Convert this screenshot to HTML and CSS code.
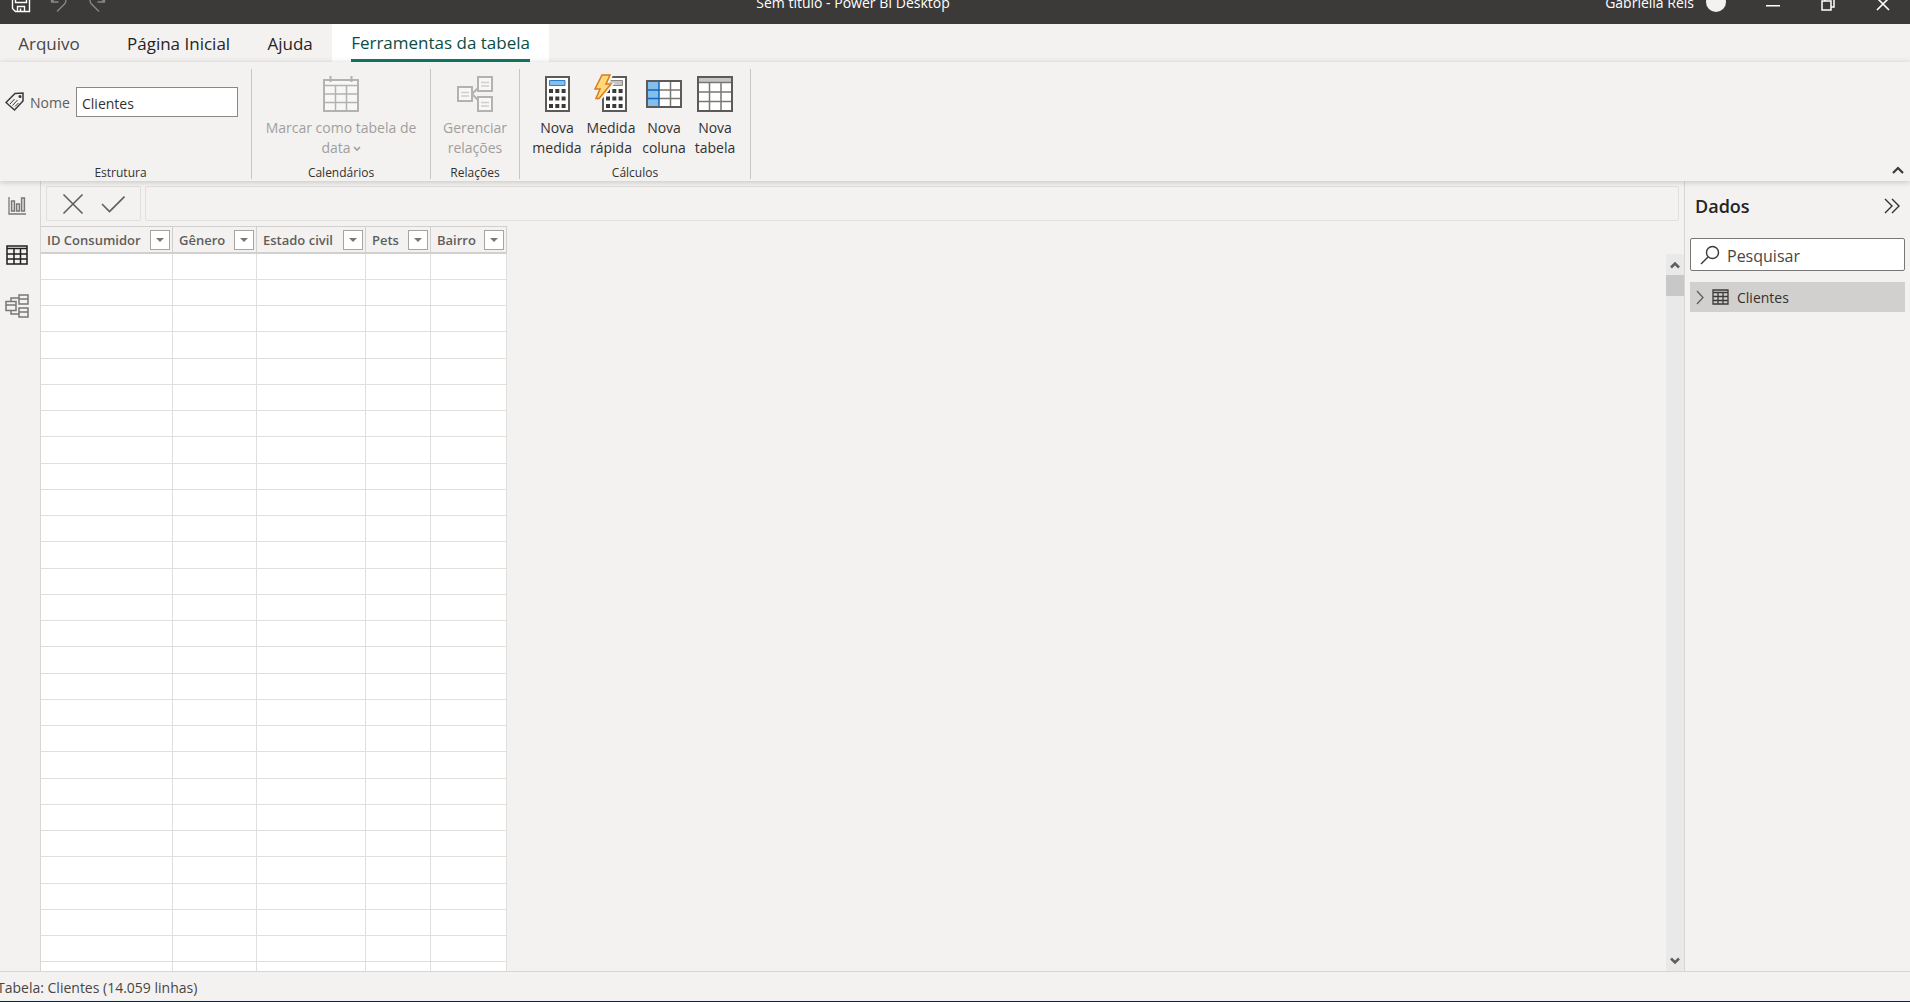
FILE: index.html
```html
<!DOCTYPE html>
<html lang="pt-BR">
<head>
<meta charset="utf-8">
<title>Sem título - Power BI Desktop</title>
<link rel="stylesheet" href="styles.css">
</head>
<body>
<div class="app">
  <header class="titlebar">
    <div class="titlebar-row">
      <div class="quick">
        <button class="plain" aria-label="Salvar"><svg width="20" height="20" viewBox="0 0 20 20" fill="none" stroke="#fff" stroke-width="1.4"><path d="M1.500 1.500h17v17h-14l-3-3zM4.500 1.500v8h11v-8M5.500 5.500h9M6.500 18.500v-5h7v5M9.500 18.500v-3"/></svg></button>
        <button class="plain" aria-label="Desfazer"><svg width="20" height="20" viewBox="0 0 20 20" fill="none" stroke="#8a8886" stroke-width="1.300"><path d="M2.500 2v7h7M2.500 9L8 3.500c5-4 11 2 8 7L8 18.500"/></svg></button>
        <button class="plain" aria-label="Refazer"><svg width="20" height="20" viewBox="0 0 20 20" fill="none" stroke="#8a8886" stroke-width="1.300"><path d="M17.500 2v7h-7M17.500 9L12 3.500c-5-4-11 2-8 7L12 18.500"/></svg></button>
      </div>
      <div class="doc-title">Sem título - Power BI Desktop</div>
      <div class="account">
        <span>Gabriella Reis</span>
        <span class="avatar"></span>
        <button class="plain win" aria-label="Minimizar"><svg width="14" height="14" viewBox="0 0 14 14"><path d="M0 8h14v1.500H0z" fill="#fff"/></svg></button>
        <button class="plain win" aria-label="Restaurar"><svg width="14" height="14" viewBox="0 0 14 14" fill="none" stroke="#fff" stroke-width="1.500"><path d="M1 4h9v9H1zM4 4V1h9v9h-3"/></svg></button>
        <button class="plain win" aria-label="Fechar"><svg width="14" height="14" viewBox="0 0 14 14" stroke="#fff" stroke-width="1.600"><path d="M1 1l12 12M13 1L1 13"/></svg></button>
      </div>
    </div>
  </header>

  <nav class="tabs">
    <button class="tab tab-file">Arquivo</button>
    <button class="tab tab-home">Página Inicial</button>
    <button class="tab">Ajuda</button>
    <button class="tab active"><span>Ferramentas da tabela</span></button>
  </nav>

  <section class="ribbon">
    <div class="group group-structure">
      <div class="group-body name-row">
        <svg width="20" height="20" viewBox="0 0 20 20" fill="none" stroke="#3b3a39" stroke-width="1.500"><path d="M1 10.500L10 1.500l8-.5v8L9.500 18z"/><path d="M5 12l4.500-5M7.500 13.500l5-5.500M10 14.500l3.500-3.500" stroke-width="1"/><circle cx="15" cy="4.500" r=".8" fill="#3b3a39"/></svg>
        <label for="table-name">Nome</label>
        <input id="table-name" type="text" value="Clientes">
      </div>
      <div class="group-label">Estrutura</div>
    </div>
    <div class="group group-calendar">
      <div class="group-body">
        <button class="cmd" disabled>
          <svg width="36" height="36" viewBox="0 0 36 36" fill="none" stroke="#b3b2b0"><path d="M1 4h34v31H1z" fill="#f7f7f7" stroke-width="2"/><path d="M1 9.500h34M12.500 10v24M23.500 10v24M1 18h34M1 26.500h34" stroke-width="1.500"/><path d="M7.500 0v6M28.500 0v6" stroke-width="2"/></svg>
          <span>Marcar como tabela de data<svg class="caret" width="8" height="6" viewBox="0 0 8 6" fill="none" stroke="#a19f9d" stroke-width="1.600"><path d="M1 1l3 3 3-3"/></svg></span>
        </button>
      </div>
      <div class="group-label">Calendários</div>
    </div>
    <div class="group group-relations">
      <div class="group-body">
        <button class="cmd" disabled>
          <svg width="36" height="36" viewBox="0 0 36 36" fill="none" stroke="#b3b2b0" stroke-width="2"><path d="M15 18l7-7M15 18l7 7"/><path d="M1 11h14v14H1zM21 1h14v14H21zM21 21h14v14H21z" fill="#f7f7f7"/><path d="M4 16.500h8M4 20h8M24 6.500h8M24 10h8M24 26.500h8M24 30h8" stroke="#cfcecc" stroke-width="1.300"/></svg>
          <span>Gerenciar relações</span>
        </button>
      </div>
      <div class="group-label">Relações</div>
    </div>
    <div class="group group-calc">
      <div class="group-body">
        <button class="cmd">
          <svg width="36" height="36" viewBox="0 0 36 36"><path d="M7 1h23v34H7z" fill="#fff" stroke="#5c5b5a" stroke-width="2"/><path d="M10.500 4.500h15.500v5H10.500z" fill="#83beec" stroke="#2b7fc7"/><path d="M10 15h16.600M10 22.500h16.600M10 30h16.600" stroke="#3b3a39" stroke-width="4" stroke-dasharray="4 2.300"/></svg>
          <span>Nova medida</span>
        </button>
        <button class="cmd">
          <svg width="36" height="36" viewBox="0 0 36 36"><path d="M10 1h23v34H10z" fill="#fff" stroke="#5c5b5a" stroke-width="2"/><path d="M16 4.500h13.500v5H16z" fill="#c8c6c4" stroke="#8a8886"/><path d="M13 15h16.600M13 22.500h16.600M13 30h16.600" stroke="#3b3a39" stroke-width="4" stroke-dasharray="4 2.300"/><path d="M8-1h11l-4 9h5L7 24H2l4-10H1z" fill="#f3f2f1" stroke="#f3f2f1" stroke-width="2"/><path class="bolt" d="M9-1h8l-4 9h5L6 22.500H3L7 13H2z" fill="#ffd97a" stroke="#e07818" stroke-width="1.500"/></svg>
          <span>Medida rápida</span>
        </button>
        <button class="cmd">
          <svg width="36" height="36" viewBox="0 0 36 36"><path d="M1 5h34v26H1z" fill="#fff"/><path d="M1 5h12v26H1z" fill="#83beec"/><path d="M13 14h22M13 22.500h22M24.500 5v26" stroke="#797775" stroke-width="1.500"/><path d="M1 14h12M1 22.500h12M13 5v26" stroke="#1068b8" stroke-width="1.500"/><path d="M1 5h34v26H1z" fill="none" stroke="#5c5b5a" stroke-width="2"/></svg>
          <span>Nova coluna</span>
        </button>
        <button class="cmd">
          <svg width="36" height="36" viewBox="0 0 36 36"><path d="M1 1h34v34H1z" fill="#fff"/><path d="M1 1h34v5H1z" fill="#c8c6c4"/><path d="M1 6.500h34M1 16h34M1 25.500h34M12.500 7v28M24 7v28" stroke="#797775" stroke-width="1.500"/><path d="M1 1h34v34H1z" fill="none" stroke="#5c5b5a" stroke-width="2"/></svg>
          <span>Nova tabela</span>
        </button>
      </div>
      <div class="group-label">Cálculos</div>
    </div>
    <button class="plain collapse" aria-label="Recolher faixa de opções"><svg width="12" height="8" viewBox="0 0 12 8" fill="none" stroke="#3b3a39" stroke-width="2.200"><path d="M1 7l5-5 5 5"/></svg></button>
  </section>

  <main class="workspace">
    <nav class="rail">
      <button class="plain" aria-label="Relatório"><svg width="20" height="20" viewBox="0 0 20 20" fill="#d2d0ce" stroke="#797775" stroke-width="1.300"><path d="M2 1v17h17" fill="none"/><path d="M4.500 5h3v10h-3zM9.500 8h3v7h-3zM14.500 2h3v13h-3z"/></svg></button>
      <button class="plain" aria-label="Dados"><svg width="22" height="20" viewBox="0 0 22 20" fill="none" stroke="#201f1e" stroke-width="1.500"><path d="M1 1h20v18H1zM1 3.500h20M1 9h20M1 14h20M8 4v15M14.500 4v15"/></svg></button>
      <button class="plain" aria-label="Modelo"><svg width="24" height="24" viewBox="0 0 24 24" fill="none" stroke="#797775" stroke-width="1.500"><path d="M1 7.500h10v9H1zM1 11h10M14 1h9v9h-9zM14 5h9M14 14h9v9h-9zM14 18h9M6 7.500V4h8M6 16.500V20h8"/></svg></button>
    </nav>

    <section class="data-view">
      <div class="formula">
        <div class="formula-actions">
          <button class="plain" aria-label="Cancelar"><svg width="22" height="22" viewBox="0 0 22 22" stroke="#605e5c" stroke-width="1.600"><path d="M1.500 1.500l19 19M20.500 1.500l-19 19"/></svg></button>
          <button class="plain" aria-label="Confirmar"><svg width="24" height="18" viewBox="0 0 24 18" fill="none" stroke="#605e5c" stroke-width="1.600"><path d="M1 9l7.500 7.500L23.500 1.500"/></svg></button>
        </div>
        <input class="formula-input" type="text" aria-label="Fórmula">
      </div>
      <div class="grid-area">
        <div class="table-clip">
          <table class="grid">
            <colgroup><col class="c-id"><col class="c-gender"><col class="c-status"><col class="c-pets"><col class="c-area"></colgroup>
            <thead><tr id="head"></tr></thead>
            <tbody id="rows"></tbody>
          </table>
        </div>
        <div class="scroll">
          <button class="plain" aria-label="Rolar para cima"><svg width="10" height="8" viewBox="0 0 10 8" fill="none" stroke="#605e5c" stroke-width="2.500"><path d="M1 6.500l4-4 4 4"/></svg></button>
          <div class="thumb"></div>
          <button class="plain down" aria-label="Rolar para baixo"><svg width="10" height="8" viewBox="0 0 10 8" fill="none" stroke="#605e5c" stroke-width="2.500"><path d="M1 1.500l4 4 4-4"/></svg></button>
        </div>
      </div>
    </section>

    <aside class="pane">
      <div class="pane-head">
        <h2>Dados</h2>
        <button class="plain" aria-label="Recolher painel"><svg width="16" height="16" viewBox="0 0 16 16" fill="none" stroke="#323130" stroke-width="1.400"><path d="M1 1l7 7-7 7M8 1l7 7-7 7"/></svg></button>
      </div>
      <div class="search">
        <svg width="20" height="20" viewBox="0 0 20 20" fill="none" stroke="#3b3a39" stroke-width="1.400"><circle cx="12.500" cy="7.500" r="6"/><path d="M8 12l-7 7"/></svg>
        <input type="text" placeholder="Pesquisar" aria-label="Pesquisar">
      </div>
      <button class="field">
        <svg width="8" height="15" viewBox="0 0 8 15" fill="none" stroke="#605e5c" stroke-width="1.300"><path d="M1 1l6 6.500L1 14"/></svg>
        <svg width="17" height="16" viewBox="0 0 17 16" fill="none" stroke="#3b3a39" stroke-width="1.300"><path d="M1 1h15v14H1zM1 3.500h15M1 7.500h15M1 11.500h15M6 4v11M11 4v11"/></svg>
        <span>Clientes</span>
      </button>
    </aside>
  </main>

  <footer class="status">Tabela: Clientes (14.059 linhas)</footer>
</div>
<script src="app.js"></script>
</body>
</html>
```
FILE: app.js
```js
const columns = ["ID Consumidor", "Gênero", "Estado civil", "Pets", "Bairro"];
document.getElementById("head").innerHTML = columns.map(name =>
  `<th scope="col"><div class="th"><span>${name}</span><button class="filter" aria-label="Filtrar ${name}"></button></div></th>`).join("");
document.getElementById("rows").innerHTML =
  ("<tr>" + "<td></td>".repeat(columns.length) + "</tr>").repeat(60);
```
FILE: styles.css
```css
* { box-sizing: border-box; }
body {
  margin: 0;
  background: #f3f2f1;
  color: #323130;
  font-family: "Open Sans", "Noto Sans", sans-serif;
  font-size: 14px;
}
button, input { font: inherit; color: inherit; }
button { padding: 0; border: 0; background: none; }
svg { display: block; flex: none; }
.plain { display: flex; align-items: center; justify-content: center; }

.app {
  display: flex;
  flex-direction: column;
  height: 100vh;
  overflow: hidden;
  border-bottom: 1px solid #0f2240;
}

/* Title bar: its row runs past the top edge of the window */
.titlebar { height: 24px; flex: none; overflow: hidden; background: #3b3a39; color: #fff; }
.titlebar-row {
  display: grid;
  grid-template-columns: 1fr auto 1fr;
  align-items: center;
  height: 40px;
  margin-top: -18px;
}
.quick { display: flex; gap: 18px; padding: 2px 0 0 11px; }
.doc-title { padding-right: 204px; }
.account { display: flex; align-items: center; justify-content: flex-end; padding-right: 20px; white-space: nowrap; }
.avatar { width: 20px; height: 20px; margin: 0 13px 0 12px; border-radius: 50%; background: #f3f2f1; }
.win { width: 42px; margin-left: 13px; height: 20px; padding-top: 4px; }
.account .win:last-child { width: 14px; margin-left: 27px; }

.tabs { display: flex; flex: none; height: 38px; font-size: 17px; color: #252423; }
.tab { padding: 0 18px; height: 38px; white-space: nowrap; min-width: 84px; }
.tab-file { min-width: 98px; margin-right: 11px; color: #484644; }
.tab-home { min-width: 139px; }
.tab.active { display: flex; padding: 0 19px; background: #fff; color: #0b4d44; font-weight: 500; }
.tab.active span { height: 38px; line-height: 38px; border-bottom: 3px solid #117865; }

.ribbon {
  position: relative;
  z-index: 1;
  display: flex;
  flex: none;
  height: 119px;
  padding: 7px 0 2px;
  background: #f3f2f1;
  box-shadow: 0 1px 6px rgba(0, 0, 0, .2);
}
.group { display: flex; flex-direction: column; border-right: 1px solid #c8c6c4; }
.group-structure { width: 252px; }
.group-calendar { width: 179px; }
.group-relations { width: 89px; }
.group-calc { width: 231px; }
.group-body { display: flex; flex: 1; justify-content: center; align-items: flex-start; padding-top: 7px; }
.group-label { font-size: 12px; line-height: 12px; text-align: center; }
.group-structure .group-label { padding-right: 10px; }
.cmd { display: flex; flex-direction: column; align-items: center; gap: 6px; line-height: 20px; width: 54px; }
.cmd:nth-child(3) { width: 52px; }
.cmd:nth-child(4) { width: 50px; }
.cmd:disabled { width: auto; padding: 0 8px; color: #a19f9d; }
.cmd svg { overflow: visible; }
.caret { display: inline-block; margin-left: 2px; vertical-align: middle; }
.name-row { justify-content: flex-start; gap: 5px; padding: 18px 0 0 5px; }
.name-row svg { margin-top: 5px; }
.name-row label { line-height: 32px; color: #605e5c; }
.name-row input { width: 162px; height: 30px; margin-right: 13px; margin-left: auto; padding: 2px 5px 0; border: 1px solid #8a8886; background: #fff; }
.collapse { margin: auto 4px 3px auto; width: 16px; height: 12px; }

.workspace { display: flex; flex: 1; min-height: 0; }
.rail { display: flex; flex-direction: column; align-items: center; gap: 29px; width: 41px; padding: 15px 7px 0 0; border-right: 1px solid #d8d6d4; }

.data-view { display: flex; flex-direction: column; flex: 1; min-width: 0; }
.formula { display: flex; gap: 4px; flex: none; padding: 5px; }
.formula-actions { display: flex; align-items: center; gap: 17px; width: 95px; height: 35px; padding-left: 15px; border: 1px solid #e1dfdd; border-radius: 2px; }
.formula-input { flex: 1; height: 35px; border: 1px solid #e1dfdd; border-radius: 2px; background: transparent; }
.grid-area { display: flex; flex: 1; min-height: 0; justify-content: space-between; }
.table-clip { overflow: hidden; }
.grid { width: 466px; table-layout: fixed; border-collapse: separate; border-spacing: 0; }
.c-id { width: 132px; }
.c-gender { width: 84px; }
.c-status { width: 109px; }
.c-pets { width: 65px; }
.c-area { width: 76px; }
.grid th { height: 28px; padding: 0; border: solid #d2d0ce; border-width: 1px 1px 2px 0; font-size: 13px; font-weight: 600; color: #605e5c; text-align: left; }
.th { display: flex; align-items: center; justify-content: space-between; padding: 0 2px 0 6px; white-space: nowrap; }
.filter { display: flex; align-items: center; justify-content: center; width: 20px; height: 20px; border: 1px solid #a6a4a2; background: #fff; }
.filter::before { content: ""; border: 4px solid transparent; border-top-color: #797775; border-bottom: 0; }
.grid td { height: 26px; padding: 0; border: solid #e1dfdd; border-width: 0 1px 1px 0; background: #fff; }
.grid tr:nth-child(4n) td { height: 27px; }

.scroll { display: flex; flex-direction: column; width: 18px; margin-top: 28px; background: #e9e9e9; }
.scroll button { height: 21px; }
.thumb { height: 21px; background: #c8c8c8; }
.scroll .down { margin-top: auto; }

.pane { flex: none; width: 226px; padding: 11px 5px 0; border-left: 1px solid #d8d6d4; }
.pane-head { display: flex; align-items: center; justify-content: space-between; height: 28px; padding: 0 5px; }
.pane-head h2 { margin: 0; font-size: 18px; font-weight: 600; color: #252423; }
.search { display: flex; align-items: center; gap: 7px; height: 33px; margin-top: 18px; padding: 0 9px; border: 1px solid #797775; border-radius: 2px; background: #fff; }
.search input { width: 100%; min-width: 0; border: 0; padding: 2px 0 0; background: none; font-size: 16px; }
.search input::placeholder { color: #484644; opacity: 1; }
.field { display: flex; align-items: center; gap: 8px; width: 100%; height: 30px; margin-top: 11px; padding: 0 6px; background: #d2d0ce; }

.status { flex: none; height: 30px; border-top: 1px solid #d8d6d4; line-height: 32px; text-indent: -3px; color: #484644; }
```
